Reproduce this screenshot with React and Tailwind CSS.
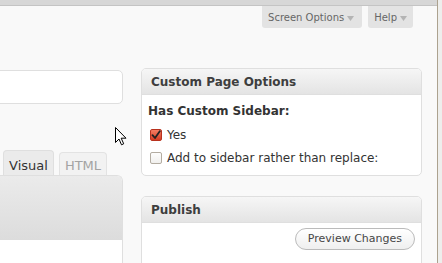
import React from "react";

function Arrow() {
  return (
    <svg width="7" height="5" viewBox="0 0 7 5" className="ml-[3px] mt-[3px] shrink-0">
      <path d="M0 0 H7 L3.5 5 Z" fill="#b4b4b4" />
    </svg>
  );
}

function Checkbox({ checked }) {
  if (checked) {
    return (
      <span className="w-[12px] h-[12px] rounded-[2px] border border-[#b8321e] bg-gradient-to-b from-[#f47d62] to-[#d43c22] flex items-center justify-center shrink-0">
        <svg width="10" height="10" viewBox="0 0 10 10">
          <path d="M1.5 5.2 L4 8 L8.8 1.2" fill="none" stroke="#222" strokeWidth="1.8" strokeLinecap="round" strokeLinejoin="round" />
        </svg>
      </span>
    );
  }
  return (
    <span className="w-[12px] h-[12px] rounded-[2px] border border-[#b3aca1] bg-gradient-to-b from-[#fdfdfd] to-[#f1f0ee] shrink-0" />
  );
}

function Postbox({ title, children }) {
  return (
    <div className="shrink-0 border border-[#dfdfdf] rounded-[5px] bg-white overflow-hidden">
      <div className="h-[26px] border-b border-[#dfdfdf] bg-gradient-to-b from-[#f6f6f6] to-[#e4e4e4] flex items-center px-[9px] text-[12px] font-bold text-[#3e3e3e]">
        {title}
      </div>
      {children}
    </div>
  );
}

export default function App() {
  return (
    <div
      className="relative w-[442px] h-[263px] overflow-hidden flex bg-[#f9f9f9]"
      style={{ fontFamily: '"DejaVu Sans", Verdana, sans-serif' }}
    >
      <div className="w-[437px] shrink-0 flex flex-col">
        <div className="h-[6px] shrink-0 bg-[#d7d7d7] border-b border-[#c4c4c4]" />
        <div className="flex shrink-0 justify-end gap-[6px] pr-[24px]">
          <div className="h-[22px] bg-[#e3e3e3] rounded-b-[3px] flex items-center pl-[6px] pr-[8px] text-[10px] text-[#666]">
            Screen Options
            <Arrow />
          </div>
          <div className="h-[22px] bg-[#e3e3e3] rounded-b-[3px] flex items-center pl-[6px] pr-[6px] text-[10px] text-[#666]">
            Help
            <Arrow />
          </div>
        </div>
        <div className="flex shrink-0 mt-[40px] pr-[15px]">
          <div className="flex-1 flex flex-col">
            <div className="shrink-0 -ml-[20px] mt-[2px] h-[34px] border border-[#dfdfdf] rounded-[5px] bg-white" />
            <div className="shrink-0 flex items-end gap-[5px] ml-[3px] mt-[46px]">
              <div className="w-[51px] h-[25px] bg-[#ebebeb] border border-b-0 border-[#dfdfdf] rounded-t-[4px] flex items-center justify-center pt-[6px] text-[13px] text-[#333]">
                Visual
              </div>
              <div className="w-[48px] h-[23px] bg-[#f2f2f2] border border-b-0 border-[#e3e3e3] rounded-t-[4px] flex items-center justify-center pt-[4px] text-[13px] text-[#a3a3a3]">
                HTML
              </div>
            </div>
            <div className="shrink-0 -ml-[20px] border-t border-r border-[#dfdfdf] rounded-tr-[6px] overflow-hidden bg-white h-[100px]">
              <div className="h-[64px] bg-gradient-to-b from-[#ebebeb] to-[#dcdcdc]" />
            </div>
          </div>
          <div className="w-[281px] ml-[18px] shrink-0 flex flex-col gap-[20px]">
            <Postbox title="Custom Page Options">
              <div className="px-[6px] pt-[8px] pb-[9px] text-[12px] text-[#333]">
                <div className="h-[16px] leading-[16px] font-bold">Has Custom Sidebar:</div>
                <div className="h-[16px] mt-[8px] flex items-center gap-[5px] pl-[2px]">
                  <Checkbox checked />
                  <span>Yes</span>
                </div>
                <div className="h-[16px] mt-[7px] flex items-center gap-[5px] pl-[2px]">
                  <Checkbox />
                  <span>Add to sidebar rather than replace:</span>
                </div>
              </div>
            </Postbox>
            <Postbox title="Publish">
              <div className="flex justify-end pt-[5px] pr-[6px] h-[60px]">
                <div className="h-[22px] px-[12px] rounded-full border border-[#bbbbbb] bg-gradient-to-b from-white to-[#efefef] flex items-center text-[11px] text-[#464646]">
                  Preview Changes
                </div>
              </div>
            </Postbox>
          </div>
        </div>
      </div>
      <div className="w-px shrink-0 bg-[#aca28f]" />
      <div className="flex-1 bg-[#eeeeec]" />
      <svg className="absolute left-[115px] top-[127px]" width="12" height="19" viewBox="0 0 12 19">
        <path d="M0.5 0.5 L0.5 15.5 L4 12 L6.5 17.8 L8.7 16.8 L6.2 11.2 L11 11.2 Z" fill="#fff" stroke="#000" strokeWidth="1" strokeLinejoin="miter" />
      </svg>
    </div>
  );
}
